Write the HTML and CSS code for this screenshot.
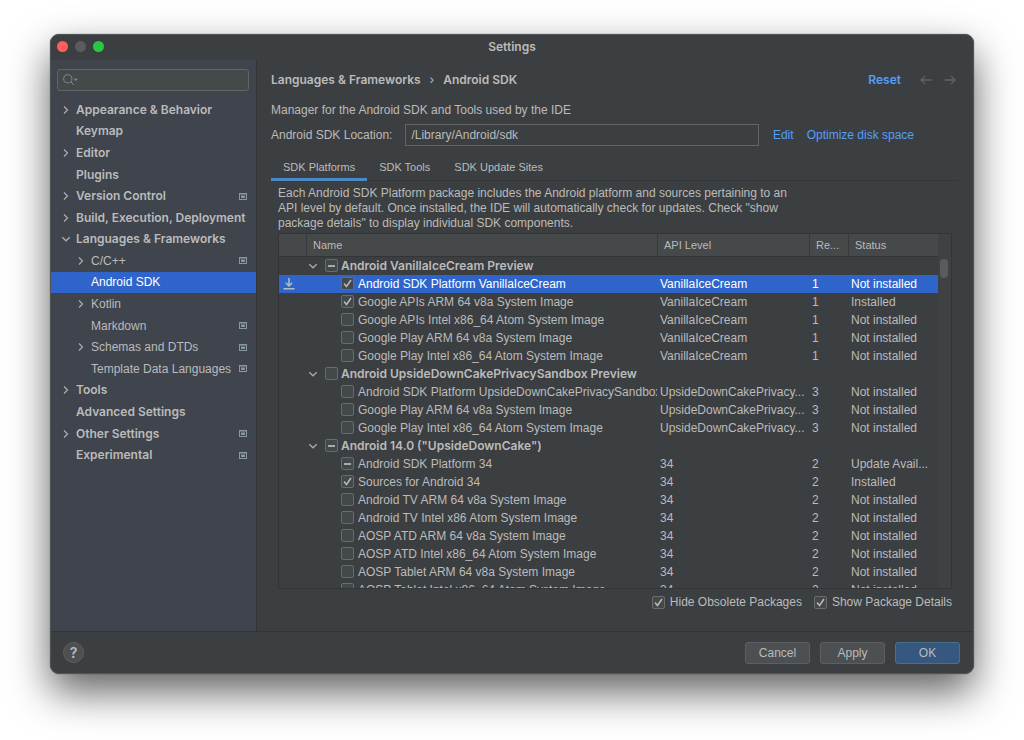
FILE: index.html
```html
<!DOCTYPE html>
<html lang="en">
<head>
<meta charset="utf-8">
<title>Settings</title>
<link rel="stylesheet" href="styles.css">
</head>
<body>
<svg class="defs" aria-hidden="true">
  <symbol id="right" viewBox="0 0 10 10"><path d="M3 1.500 6.500 5 3 8.500" fill="none" stroke="currentColor" stroke-width="1.200"/></symbol>
  <symbol id="down" viewBox="0 0 10 10"><path d="M1.300 3.300 5 6.800 8.700 3.300" fill="none" stroke="currentColor" stroke-width="1.200"/></symbol>
  <symbol id="project" viewBox="0 0 8 7"><path d="M0 0h8v7H0zM1 1.500V6h6V1.500zM2 2.500h4V5H2z" fill="currentColor" fill-rule="evenodd"/></symbol>
</svg>
<div class="window">
  <header class="titlebar">
    <div class="lights"><span class="light close"></span><span class="light minimize"></span><span class="light zoom"></span></div>
    <h1>Settings</h1>
  </header>
  <div class="content">
    <aside class="sidebar">
      <label class="search">
        <svg width="15" height="12" viewBox="0 0 15 12" fill="none" stroke="currentColor"><circle cx="4.800" cy="4.800" r="4.100"/><path d="m7.800 7.800 3.200 3.200"/><path d="M10.500 4.700h4.500L12.750 7z" fill="currentColor" stroke="none"/></svg>
        <input type="text" aria-label="Search settings">
      </label>
      <ul class="tree">
        <li><svg class="chev"><use href="#right"/></svg><span>Appearance &amp; Behavior</span></li>
        <li class="leaf"><span>Keymap</span></li>
        <li><svg class="chev"><use href="#right"/></svg><span>Editor</span></li>
        <li class="leaf"><span>Plugins</span></li>
        <li><svg class="chev"><use href="#right"/></svg><span>Version Control</span><svg class="proj"><use href="#project"/></svg></li>
        <li><svg class="chev"><use href="#right"/></svg><span>Build, Execution, Deployment</span></li>
        <li><svg class="chev"><use href="#down"/></svg><span>Languages &amp; Frameworks</span></li>
        <li class="child"><svg class="chev"><use href="#right"/></svg><span>C/C++</span><svg class="proj"><use href="#project"/></svg></li>
        <li class="child leaf selected"><span>Android SDK</span></li>
        <li class="child"><svg class="chev"><use href="#right"/></svg><span>Kotlin</span></li>
        <li class="child leaf"><span>Markdown</span><svg class="proj"><use href="#project"/></svg></li>
        <li class="child"><svg class="chev"><use href="#right"/></svg><span>Schemas and DTDs</span><svg class="proj"><use href="#project"/></svg></li>
        <li class="child leaf"><span>Template Data Languages</span><svg class="proj"><use href="#project"/></svg></li>
        <li><svg class="chev"><use href="#right"/></svg><span>Tools</span></li>
        <li class="leaf"><span>Advanced Settings</span></li>
        <li><svg class="chev"><use href="#right"/></svg><span>Other Settings</span><svg class="proj"><use href="#project"/></svg></li>
        <li class="leaf"><span>Experimental</span><svg class="proj"><use href="#project"/></svg></li>
      </ul>
    </aside>
    <main class="main">
      <div class="crumbs">
        <span>Languages &amp; Frameworks</span><span class="sep">›</span><span>Android SDK</span>
        <a class="reset" href="#">Reset</a>
        <button class="nav" aria-label="Back"><svg width="12" height="10" viewBox="0 0 12 10"><path d="M11.500 5H1M5 1 1 5l4 4" fill="none" stroke="currentColor" stroke-width="1.300"/></svg></button>
        <button class="nav" aria-label="Forward"><svg width="12" height="10" viewBox="0 0 12 10"><path d="M.5 5H11M7 1l4 4-4 4" fill="none" stroke="currentColor" stroke-width="1.300"/></svg></button>
      </div>
      <p class="intro">Manager for the Android SDK and Tools used by the IDE</p>
      <div class="location">
        <label for="sdk">Android SDK Location:</label>
        <input id="sdk" type="text" value="/Library/Android/sdk" readonly>
        <a href="#">Edit</a>
        <a href="#">Optimize disk space</a>
      </div>
      <div class="tabs" role="tablist">
        <button class="tab active" role="tab" aria-selected="true">SDK Platforms</button>
        <button class="tab" role="tab">SDK Tools</button>
        <button class="tab" role="tab">SDK Update Sites</button>
      </div>
      <section class="panel">
        <p class="about">Each Android SDK Platform package includes the Android platform and sources pertaining to an<br>API level by default. Once installed, the IDE will automatically check for updates. Check "show<br>package details" to display individual SDK components.</p>
        <div class="packages">
          <table>
            <colgroup><col class="c-icon"><col><col class="c-api"><col class="c-rev"><col class="c-status"></colgroup>
            <thead><tr><th aria-label="Action"></th><th>Name</th><th>API Level</th><th>Re...</th><th>Status</th></tr></thead>
            <tbody>
              <tr class="group"><td></td><td><label><svg class="chev"><use href="#down"/></svg><input type="checkbox" class="mixed">Android VanillaIceCream Preview</label></td><td></td><td></td><td></td></tr>
              <tr class="selected"><td><svg class="download" width="12" height="12" viewBox="0 0 12 12"><path d="M6 0v7.500M2.800 4.800 6 8l3.200-3.200M.5 10.700h11" fill="none" stroke="currentColor" stroke-width="1.500"/></svg></td><td><label><input type="checkbox" checked>Android SDK Platform VanillaIceCream</label></td><td>VanillaIceCream</td><td>1</td><td>Not installed</td></tr>
              <tr><td></td><td><label><input type="checkbox" checked>Google APIs ARM 64 v8a System Image</label></td><td>VanillaIceCream</td><td>1</td><td>Installed</td></tr>
              <tr><td></td><td><label><input type="checkbox">Google APIs Intel x86_64 Atom System Image</label></td><td>VanillaIceCream</td><td>1</td><td>Not installed</td></tr>
              <tr><td></td><td><label><input type="checkbox">Google Play ARM 64 v8a System Image</label></td><td>VanillaIceCream</td><td>1</td><td>Not installed</td></tr>
              <tr><td></td><td><label><input type="checkbox">Google Play Intel x86_64 Atom System Image</label></td><td>VanillaIceCream</td><td>1</td><td>Not installed</td></tr>
              <tr class="group"><td></td><td><label><svg class="chev"><use href="#down"/></svg><input type="checkbox">Android UpsideDownCakePrivacySandbox Preview</label></td><td></td><td></td><td></td></tr>
              <tr><td></td><td><label><input type="checkbox">Android SDK Platform UpsideDownCakePrivacySandbox</label></td><td>UpsideDownCakePrivacy...</td><td>3</td><td>Not installed</td></tr>
              <tr><td></td><td><label><input type="checkbox">Google Play ARM 64 v8a System Image</label></td><td>UpsideDownCakePrivacy...</td><td>3</td><td>Not installed</td></tr>
              <tr><td></td><td><label><input type="checkbox">Google Play Intel x86_64 Atom System Image</label></td><td>UpsideDownCakePrivacy...</td><td>3</td><td>Not installed</td></tr>
              <tr class="group"><td></td><td><label><svg class="chev"><use href="#down"/></svg><input type="checkbox" class="mixed">Android 14.0 ("UpsideDownCake")</label></td><td></td><td></td><td></td></tr>
              <tr><td></td><td><label><input type="checkbox" class="mixed">Android SDK Platform 34</label></td><td>34</td><td>2</td><td>Update Avail...</td></tr>
              <tr><td></td><td><label><input type="checkbox" checked>Sources for Android 34</label></td><td>34</td><td>2</td><td>Installed</td></tr>
              <tr><td></td><td><label><input type="checkbox">Android TV ARM 64 v8a System Image</label></td><td>34</td><td>2</td><td>Not installed</td></tr>
              <tr><td></td><td><label><input type="checkbox">Android TV Intel x86 Atom System Image</label></td><td>34</td><td>2</td><td>Not installed</td></tr>
              <tr><td></td><td><label><input type="checkbox">AOSP ATD ARM 64 v8a System Image</label></td><td>34</td><td>2</td><td>Not installed</td></tr>
              <tr><td></td><td><label><input type="checkbox">AOSP ATD Intel x86_64 Atom System Image</label></td><td>34</td><td>2</td><td>Not installed</td></tr>
              <tr><td></td><td><label><input type="checkbox">AOSP Tablet ARM 64 v8a System Image</label></td><td>34</td><td>2</td><td>Not installed</td></tr>
              <tr><td></td><td><label><input type="checkbox">AOSP Tablet Intel x86_64 Atom System Image</label></td><td>34</td><td>2</td><td>Not installed</td></tr>
            </tbody>
          </table>
          <div class="scrollbar"><div class="thumb"></div></div>
        </div>
        <div class="options">
          <label><input type="checkbox" checked>Hide Obsolete Packages</label>
          <label><input type="checkbox" checked>Show Package Details</label>
        </div>
      </section>
    </main>
  </div>
  <footer class="footer">
    <button class="help" aria-label="Help">?</button>
    <button class="btn">Cancel</button>
    <button class="btn">Apply</button>
    <button class="btn primary">OK</button>
  </footer>
</div>
</body>
</html>
```
FILE: styles.css
```css
* { box-sizing: border-box; }
body {
  margin: 0;
  height: 100vh;
  padding: 34px 50px 66px;
  background: #fff;
  color: #bbb;
  font: 12px/18px "Liberation Sans", Arial, sans-serif;
}
h1, p, ul { margin: 0; padding: 0; }
ul { list-style: none; }
button, input { font: inherit; color: inherit; margin: 0; }
button { border: 0; padding: 0; background: none; }
a { color: #589df6; text-decoration: none; }
.defs { position: absolute; width: 0; height: 0; }

.window {
  display: flex;
  flex-direction: column;
  height: 100%;
  overflow: hidden;
  border: 1px solid #515557;
  border-radius: 9px;
  background: #3c3f41;
  box-shadow: 0 0 1px rgba(0, 0, 0, .8), 0 18px 40px rgba(0, 0, 0, .62);
}
.titlebar {
  display: grid;
  grid-template-columns: 1fr auto 1fr;
  align-items: center;
  height: 25px;
  padding-bottom: 2px;
  flex: none;
}
.titlebar h1, .tree, .crumbs, .group, .help { font-family: Inter, "Liberation Sans", sans-serif; font-weight: 600; }
.titlebar h1 { font-size: 12px; }
.lights { display: flex; gap: 7px; padding-left: 6px; }
.light { width: 11px; height: 11px; border-radius: 50%; }
.close { background: #ff5f57; }
.minimize { background: #5a5b5c; }
.zoom { background: #28c840; }

.content { display: flex; flex: 1; min-height: 0; }
.sidebar {
  flex: none;
  width: 206px;
  border-right: 1px solid #323437;
  background: #40444d;
}
.search {
  display: flex;
  align-items: center;
  height: 22px;
  margin: 9px 7px 8px 6px;
  padding-left: 5px;
  border: 1px solid #616566;
  border-radius: 3px;
  background: #45494a;
  color: #80898e;
}
.search input { flex: 1; min-width: 0; border: 0; background: none; outline: 0; }
.tree { display: grid; grid-auto-rows: 1fr; height: 367px; }
.tree li { display: flex; align-items: center; padding: 0 9px 0 10px; white-space: nowrap; }
.tree span { flex: 1; padding-left: 5px; }
.tree .leaf { padding-left: 20px; }
.tree .child { padding-left: 25px; font-family: "Liberation Sans", Arial, sans-serif; font-weight: 400; }
.tree .child.leaf { padding-left: 35px; }
.tree .selected { background: #2f65ca; color: #fff; }
.chev { width: 10px; height: 10px; flex: none; color: #adadad; }
.proj { width: 8px; height: 7px; flex: none; color: #8a98a1; }

.main {
  display: flex;
  flex-direction: column;
  flex: 1;
  min-width: 0;
  padding: 10px 14px 0;
}
.crumbs { display: flex; align-items: center; height: 20px; }
.sep { margin: 0 9px; font-weight: 400; }
.reset { margin: 0 19px 0 auto; }
.nav { display: flex; color: #606365; }
.nav + .nav { margin: 0 3px 0 12px; }
.intro { margin-top: 11px; }
.location { display: flex; align-items: center; height: 22px; margin-top: 5px; }
.location input {
  flex: 1;
  min-width: 0;
  height: 22px;
  margin: 0 14px 0 13px;
  padding: 0 5px;
  border: 1px solid #646464;
  background: none;
  outline: 0;
}
.location a { margin-right: 13px; }
.location a:last-child { margin-right: 45px; }
.tabs { display: flex; height: 35px; box-shadow: inset 0 -1px #353739; }
.tab { padding: 10px 12px 4px; font-size: 11px; }
.tab.active { border-bottom: 3px solid #4a88c7; padding-bottom: 1px; }
.panel {
  display: flex;
  flex-direction: column;
  flex: 1;
  min-height: 0;
  padding: 5px 7px 18px;
}
.about { line-height: 15px; margin-bottom: 2px; white-space: nowrap; }
.packages {
  display: flex;
  align-items: flex-start;
  flex: 1;
  min-height: 0;
  overflow: hidden;
  border: 1px solid #323435;
}
table { flex: 1; width: 0; table-layout: fixed; border-collapse: collapse; }
.c-icon { width: 27px; }
.c-api { width: 152px; }
.c-rev { width: 39px; }
.c-status { width: 90px; }
th {
  height: 22px;
  padding: 0 7px;
  border-bottom: 1px solid #323435;
  background: #45494a;
  box-shadow: inset 1px 0 #37393b;
  font-size: 11px;
  font-weight: 400;
  text-align: left;
}
th:first-child { box-shadow: none; }
td {
  height: 18px;
  padding: 0 0 0 3px;
  overflow: hidden;
  white-space: nowrap;
}
td:nth-child(2) { padding-left: 35px; }
.group td:nth-child(2) { padding-left: 2px; }
td label { display: flex; align-items: center; height: 18px; }
td input { margin-right: 4px; }
.group input { margin: 0 3px 0 7px; }
tr.selected { background: #2f65ca; color: #fff; }
.download { display: block; margin-left: 1px; color: #b7bdc4; }
input[type="checkbox"] {
  appearance: none;
  flex: none;
  width: 13px;
  height: 13px;
  border: 1px solid #6b6b6b;
  border-radius: 2px;
  background: #43494a center / 11px 11px no-repeat;
}
input[type="checkbox"]:checked {
  background-image: url("data:image/svg+xml,%3Csvg xmlns='http://www.w3.org/2000/svg' viewBox='0 0 11 11'%3E%3Cpath d='M2 5.500 4.500 8.500 9 2' fill='none' stroke='%23bbb' stroke-width='1.500'/%3E%3C/svg%3E");
}
input[type="checkbox"].mixed { background-image: linear-gradient(#aaa, #aaa); background-size: 7px 2px; }
.scrollbar { flex: none; align-self: stretch; width: 13px; padding: 25px 3px 0 2px; background: #3f4244; }
.thumb { height: 19px; border-radius: 4px; background: #595b5d; }
.options { display: flex; justify-content: flex-end; gap: 12px; height: 24px; padding-top: 4px; padding-bottom: 2px; }
.options label { display: flex; align-items: center; gap: 5px; }

.footer {
  display: flex;
  align-items: center;
  flex: none;
  gap: 10px;
  height: 42px;
  padding: 0 13px 0 12px;
  border-top: 1px solid #323435;
}
.btn {
  width: 65px;
  height: 22px;
  border: 1px solid #5e6060;
  border-radius: 3px;
  background: #4c5052;
}
.primary { border-color: #4c708c; background: #365880; }
.help {
  width: 21px;
  height: 21px;
  margin-right: auto;
  border: 1px solid #5e6060;
  border-radius: 50%;
  background: #4c5052;
  font-size: 14px;
  line-height: 18px;
}
```
